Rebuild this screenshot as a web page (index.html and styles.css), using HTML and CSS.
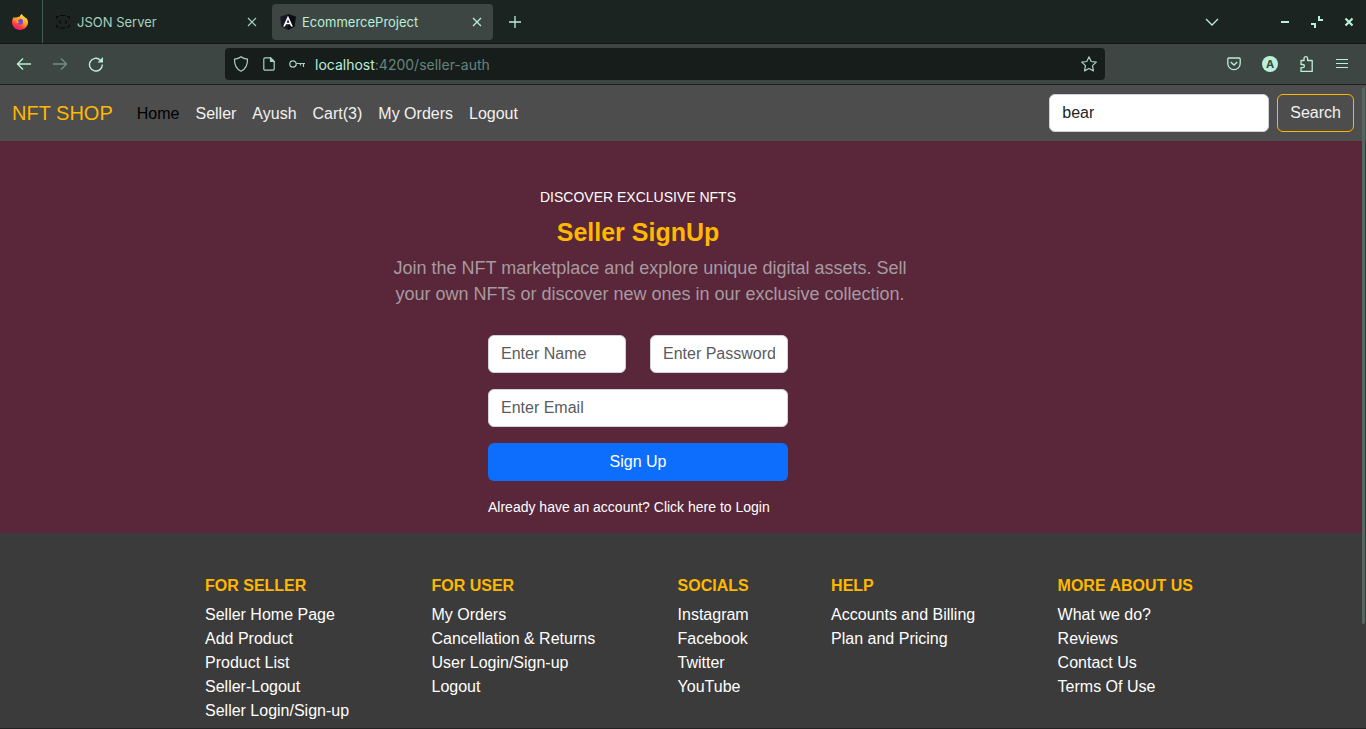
FILE: index.html
```html
<!DOCTYPE html>
<html lang="en">
<head>
<meta charset="utf-8">
<title>EcommerceProject</title>
<link rel="stylesheet" href="styles.css">
</head>
<body>
<div class="browser">
  <header class="tabs">
    <div class="pinned">
      <svg width="16" height="16" viewBox="0 0 16 16" aria-hidden="true">
        <defs>
          <linearGradient id="fox" x1=".8" y1="0" x2=".25" y2="1"><stop offset="0" stop-color="#fff44f"/><stop offset=".45" stop-color="#ffa01e"/><stop offset=".75" stop-color="#ff3647"/><stop offset="1" stop-color="#e31587"/></linearGradient>
        </defs>
        <path fill="url(#fox)" d="M10 0c.2 1.300 1.200 2 2.400 2.800.6.4 1 .9 1.200 1.500l.4-.6C15.400 5 16 6.600 16 8.300 16 12.700 12.400 16 8 16S0 12.600 0 8.300C0 6 .8 4 2.100 2.700l.3 1.200C3 3.400 3.900 3.300 4.700 3.500 5.300 3 6.500 2.500 7.600 2.800 7.900 1.700 8.800.6 10 0z"/>
        <circle cx="8" cy="7.800" r="3" fill="#7a42d8"/>
        <path fill="#ff9a1c" d="M1.500 5.500c1.200-1.400 3-1.700 4-1.200 1 0 2 .5 2.700 1.300-.9.1-1.700.7-2.500 1.200.3.900 1 1.500 2 1.600-1.400 1-3 .6-3.600-1z"/>
      </svg>
    </div>
    <div class="tab">
      <svg width="16" height="16" viewBox="0 0 16 16" fill="none" stroke="#060908" stroke-width="1" aria-hidden="true"><path d="M4 2.500H1.500v2.500M1.500 10.500v2.500H4M5 1.500h5.500M5 14h5.500M12 2.500h2.500v2.500M14.500 10.500v2.500H12M5 6v4M11 6v4"/></svg>
      <span class="tab-title">JSON Server</span>
      <button class="icon" aria-label="Close tab"><svg width="10" height="10" viewBox="0 0 10 10"><path d="M1 1l8 8M9 1L1 9"/></svg></button>
    </div>
    <div class="tab active">
      <svg width="16" height="16" viewBox="0 0 16 16" aria-hidden="true"><path fill="#171927" d="M8 0l7.800 2.700-1.200 9.900L8 16l-6.600-3.400L.2 2.700z"/><path fill="#0b0c14" d="M8 0l7.800 2.700-1.200 9.900L8 16z"/><path fill="#fff" fill-rule="evenodd" d="M8 1.800l4.900 10.800h-1.900l-1-2.400H6l-1 2.400H3.100zm0 3.600L6.600 8.700h2.800z"/></svg>
      <span class="tab-title">EcommerceProject</span>
      <button class="icon" aria-label="Close tab"><svg width="10" height="10" viewBox="0 0 10 10"><path d="M1 1l8 8M9 1L1 9"/></svg></button>
    </div>
    <button class="icon new-tab" aria-label="New tab"><svg width="12" height="12" viewBox="0 0 12 12"><path d="M6 0v12M0 6h12" stroke-width="1.300"/></svg></button>
    <div class="window-controls">
      <button class="icon list-tabs" aria-label="List all tabs"><svg width="14" height="8" viewBox="0 0 14 8"><path d="M1 1l6 6 6-6" stroke-width="1.300"/></svg></button>
      <button class="icon" aria-label="Minimize"><svg width="12" height="12" viewBox="0 0 12 12"><path d="M2 6h8" stroke-width="2"/></svg></button>
      <button class="icon" aria-label="Restore"><svg width="12" height="12" viewBox="0 0 12 12"><path d="M8 0v4h4M0 8h4v4" stroke-width="2"/></svg></button>
      <button class="icon" aria-label="Close"><svg width="12" height="12" viewBox="0 0 12 12"><path d="M2.500 2.500l7 7M9.500 2.500l-7 7" stroke-width="2.200"/></svg></button>
    </div>
  </header>

  <div class="toolbar">
    <div class="tools">
      <button class="icon" aria-label="Back"><svg width="16" height="16" viewBox="0 0 16 16"><path d="M15 8H1.500M7 2.500L1.500 8 7 13.500" stroke-width="1.400"/></svg></button>
      <button class="icon dim" aria-label="Forward"><svg width="16" height="16" viewBox="0 0 16 16"><path d="M1 8h13.500M9 2.500L14.500 8 9 13.500" stroke-width="1.400"/></svg></button>
      <button class="icon" aria-label="Reload"><svg width="16" height="16" viewBox="0 0 16 16"><path d="M14.300 8.500A6.400 6.400 0 1 1 12.300 4" stroke-width="1.400"/><path d="M15 1v5.500H9.500z" fill="currentColor" stroke="none"/></svg></button>
    </div>
    <div class="address">
      <svg width="16" height="16" viewBox="0 0 16 16"><path d="M8 .8c1.800 1.500 4 2.200 6.500 2.400.2 5.800-2 9.800-6.500 12-4.500-2.200-6.700-6.200-6.500-12C4 3 6.200 2.300 8 .8z"/></svg>
      <svg class="page-icon" width="12" height="14" viewBox="0 0 12 14"><path d="M.8 2a1.200 1.200 0 0 1 1.200-1.200h5.500l3.700 3.700V12a1.200 1.200 0 0 1-1.200 1.200H2A1.200 1.200 0 0 1 .8 12z"/><path d="M7.500.8v3.700h3.700z" fill="currentColor"/></svg>
      <svg width="16" height="10" viewBox="0 0 16 10"><circle cx="4" cy="5" r="3.200"/><path d="M7.200 4.500H16M14.500 4.500V8M11.500 4.500v2"/></svg>
      <span class="url"><span class="host">localhost</span>:4200/seller-auth</span>
      <button class="icon" aria-label="Bookmark this page"><svg width="16" height="16" viewBox="0 0 16 16"><path stroke-linejoin="round" d="M8 .8l2.200 4.700 5.100.6-3.800 3.500 1 5.300L8 12.500l-4.500 2.400 1-5.300L.7 6.100l5.100-.6z"/></svg></button>
    </div>
    <div class="tools end">
      <button class="icon" aria-label="Pocket"><svg width="14" height="14" viewBox="0 0 14 14"><path d="M1.800 1h10.400c.6 0 1 .4 1 1v4.500a6.200 6.200 0 0 1-12.400 0V2c0-.6.4-1 1-1z" stroke-width="1.300"/><path d="M3.800 5L7 8l3.200-3" stroke-width="1.300"/></svg></button>
      <button class="icon" aria-label="Account"><span class="avatar">A</span></button>
      <button class="icon" aria-label="Extensions"><svg width="16" height="16" viewBox="0 0 16 16"><path stroke-width="1.300" stroke-linejoin="round" d="M6 4.500V2.500a1.800 1.800 0 0 1 3.600 0v2h4.600v11H3v-3.800h1.800a1.600 1.600 0 0 0 0-3.200H3v-4z"/></svg></button>
      <button class="icon" aria-label="Menu"><svg width="12" height="12" viewBox="0 0 12 12"><path d="M0 1.500h12M0 5.500h12M0 9.500h12" stroke-width="1.200"/></svg></button>
    </div>
  </div>

  <div class="page">
    <nav class="navbar">
      <a class="brand" href="#">NFT SHOP</a>
      <div class="nav-links">
        <a class="current" href="#">Home</a>
        <a href="#">Seller</a>
        <a href="#">Ayush</a>
        <a href="#">Cart(3)</a>
        <a href="#">My Orders</a>
        <a href="#">Logout</a>
      </div>
      <form class="search">
        <input class="field" type="text" value="bear" aria-label="Search">
        <button class="search-button" type="button">Search</button>
      </form>
    </nav>

    <main class="hero">
      <p class="eyebrow">DISCOVER EXCLUSIVE NFTS</p>
      <h1 class="title">Seller SignUp</h1>
      <p class="lede">Join the NFT marketplace and explore unique digital assets. Sell your own NFTs or discover new ones in our exclusive collection.</p>
      <form class="signup">
        <div class="pair">
          <input class="field" type="text" placeholder="Enter Name" aria-label="Name">
          <input class="field" type="password" placeholder="Enter Password" aria-label="Password">
        </div>
        <input class="field" type="email" placeholder="Enter Email" aria-label="Email">
        <button class="submit" type="button">Sign Up</button>
        <a class="login" href="#">Already have an account? Click here to Login</a>
      </form>
    </main>

    <footer class="footer">
      <div class="columns">
        <section>
          <h2>FOR SELLER</h2>
          <ul><li><a href="#">Seller Home Page</a></li><li><a href="#">Add Product</a></li><li><a href="#">Product List</a></li><li><a href="#">Seller-Logout</a></li><li><a href="#">Seller Login/Sign-up</a></li></ul>
        </section>
        <section>
          <h2>FOR USER</h2>
          <ul><li><a href="#">My Orders</a></li><li><a href="#">Cancellation &amp; Returns</a></li><li><a href="#">User Login/Sign-up</a></li><li><a href="#">Logout</a></li></ul>
        </section>
        <section>
          <h2>SOCIALS</h2>
          <ul><li><a href="#">Instagram</a></li><li><a href="#">Facebook</a></li><li><a href="#">Twitter</a></li><li><a href="#">YouTube</a></li></ul>
        </section>
        <section>
          <h2>HELP</h2>
          <ul><li><a href="#">Accounts and Billing</a></li><li><a href="#">Plan and Pricing</a></li></ul>
        </section>
        <section>
          <h2>MORE ABOUT US</h2>
          <ul><li><a href="#">What we do?</a></li><li><a href="#">Reviews</a></li><li><a href="#">Contact Us</a></li><li><a href="#">Terms Of Use</a></li></ul>
        </section>
      </div>
    </footer>
    <div class="scroll-thumb"></div>
  </div>
</div>
</body>
</html>
```

FILE: styles.css
```css
* { box-sizing: border-box; }

body {
  margin: 0;
  font: 16px/24px "Liberation Sans", Arial, sans-serif;
  color: #fff;
}

a { color: inherit; text-decoration: none; }
h1, h2, p, ul { margin: 0; padding: 0; }
ul { list-style: none; }
button, input { font: inherit; }

.browser {
  display: flex;
  flex-direction: column;
  height: 100vh;
  overflow: hidden;
}

/* Browser chrome */
.tabs, .toolbar {
  display: flex;
  align-items: center;
  flex: none;
  color: #b9f0d9;
  font: 13px/20px Inter, sans-serif;
}
.tabs {
  height: 44px;
  background: #1c2422;
  border-bottom: 1px solid #111615;
}
.tabs svg, .toolbar svg { display: block; flex: none; }
.icon svg, .address svg { fill: none; stroke: currentColor; stroke-width: 1.2; }
.icon {
  display: flex;
  align-items: center;
  justify-content: center;
  width: 32px;
  height: 32px;
  padding: 0;
  border: 0;
  background: none;
  color: inherit;
}
.pinned {
  display: flex;
  align-items: center;
  align-self: stretch;
  width: 43px;
  padding-left: 12px;
  border-right: 1px solid #3f5e54;
}
.tab {
  display: flex;
  align-items: center;
  gap: 6px;
  width: 221px;
  height: 36px;
  margin-left: 4px;
  padding-left: 8px;
  border-radius: 4px;
  color: #a3d3bf;
}
.tab.active { background: #3e4643; color: #b9f0d9; }
.tab-title { flex: 1; }
.new-tab { margin-left: 6px; }
.window-controls { display: flex; margin-left: auto; padding-right: 1px; }
.list-tabs { margin-right: 41px; }

.toolbar {
  justify-content: space-between;
  height: 41px;
  background: #3e4643;
  border-bottom: 1px solid #1c2422;
}
.tools { display: flex; gap: 4px; flex: 1; padding-left: 8px; }
.tools.end { justify-content: flex-end; padding: 0 8px 0 0; }
.dim { color: #6f8e82; }
.address {
  display: flex;
  align-items: center;
  gap: 14px;
  width: 880px;
  height: 32px;
  margin-right: 36px;
  padding-left: 8px;
  border-radius: 4px;
  background: #171d1b;
  color: #a3d3bf;
}
.url { flex: 1; margin-left: -4px; padding-top: 2px; font-size: 14px; color: #66857a; }
.host { color: #b9f0d9; }
.avatar {
  width: 16px;
  height: 16px;
  border-radius: 8px;
  background: #b9f0d9;
  color: #3e4643;
  font-size: 11px;
  font-weight: 700;
  line-height: 16px;
  text-align: center;
}

/* Shop page */
.page {
  display: flex;
  flex: 1;
  flex-direction: column;
  position: relative;
  min-height: 0;
  overflow: hidden;
  border-bottom: 1px solid #222;
}
.scroll-thumb {
  position: absolute;
  top: 2px;
  right: 1px;
  width: 3px;
  height: 537px;
  border-radius: 2px;
  background: #54675f;
}
.navbar {
  display: flex;
  align-items: center;
  flex: none;
  height: 56px;
  padding: 0 12px;
  background: #4d4d4d;
}
.brand { margin-right: 24px; color: #ffb800; font-size: 20px; }
.nav-links { display: flex; gap: 16px; padding-top: 2px; color: #f2f2f2; }
.current { color: #000; }
.search { display: flex; gap: 8px; margin-left: auto; }
.search .field { width: 220px; }
.field {
  width: 100%;
  min-width: 0;
  height: 38px;
  padding: 6px 12px;
  border: 1px solid #ced4da;
  border-radius: 6px;
  background: #fff;
  color: #212529;
}
.field::placeholder { color: #595c5f; }
.search-button {
  height: 38px;
  padding: 0 12px;
  border: 1px solid #ffb800;
  border-radius: 6px;
  background: none;
  color: #f2f2f2;
}

.hero {
  display: flex;
  flex: none;
  flex-direction: column;
  align-items: center;
  padding: 44px 90px 16px 0;
  background: #59263a;
  text-align: center;
}
.eyebrow { font-size: 14px; }
.title {
  margin-top: 8px;
  color: #ffb800;
  font-size: 25px;
  line-height: 30px;
}
.lede {
  width: 550px;
  margin: 8px 0 28px;
  padding-left: 24px;
  color: #a79ba0;
  font-size: 18px;
  line-height: 26px;
}
.signup {
  display: flex;
  flex-direction: column;
  gap: 16px;
  width: 300px;
}
.pair { display: grid; grid-template-columns: 1fr 1fr; gap: 24px; }
.submit {
  height: 38px;
  border: 0;
  border-radius: 6px;
  background: #0d6efd;
  color: #fff;
}
.login { font-size: 14px; line-height: 20px; text-align: left; }

.footer {
  flex: 1 0 auto;
  padding: 41px 0 0;
  background: #3b3b3b;
}
.columns {
  display: flex;
  justify-content: space-between;
  max-width: 1020px;
  margin: 0 auto;
  padding-left: 32px;
}
.footer h2 {
  margin-bottom: 5px;
  color: #ffb800;
  font-size: 16px;
  line-height: 24px;
}
```
